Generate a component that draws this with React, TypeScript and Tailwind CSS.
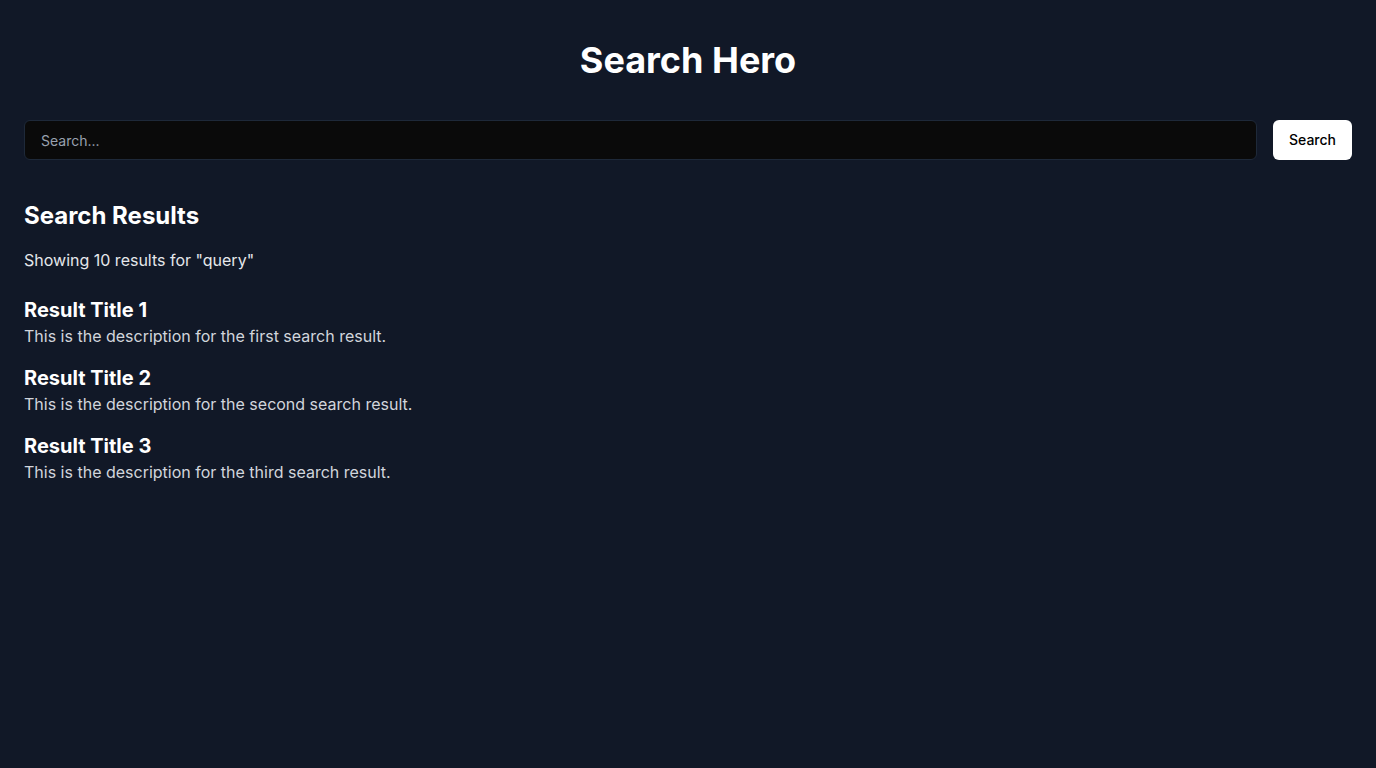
const results = [
  { title: "Result Title 1", desc: "This is the description for the first search result." },
  { title: "Result Title 2", desc: "This is the description for the second search result." },
  { title: "Result Title 3", desc: "This is the description for the third search result." },
];

export default function App() {
  return (
    <div className="min-h-screen bg-[#111827] px-6 pt-10 text-white font-['Inter',sans-serif]">
      <h1 className="mb-10 text-center text-4xl font-bold">Search Hero</h1>
      <div className="flex gap-4">
        <input
          type="text"
          placeholder="Search..."
          className="h-10 flex-1 rounded-md border border-gray-800 bg-[#0a0a0a] px-4 text-sm text-white placeholder:text-gray-400 outline-none"
        />
        <button className="h-10 rounded-md bg-white px-4 text-sm font-medium text-black">
          Search
        </button>
      </div>
      <div className="mt-10">
        <h2 className="mb-4 text-2xl font-bold">Search Results</h2>
        <p className="mb-6 text-gray-200">Showing 10 results for "query"</p>
        <div className="space-y-4">
          {results.map((r) => (
            <div key={r.title}>
              <h3 className="text-xl font-bold">{r.title}</h3>
              <p className="text-gray-300">{r.desc}</p>
            </div>
          ))}
        </div>
      </div>
    </div>
  );
}
